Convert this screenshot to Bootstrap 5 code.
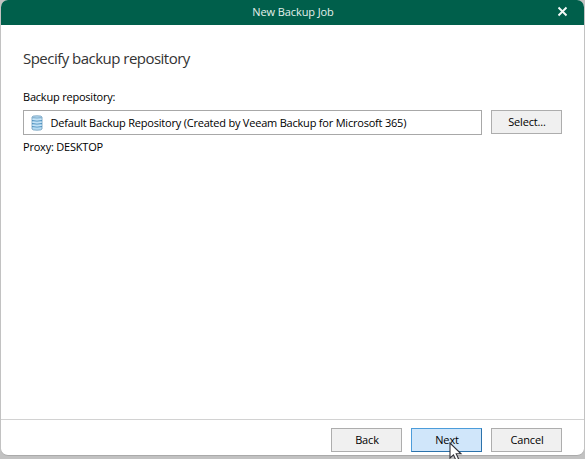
<!DOCTYPE html>
<html lang="en">
<head>
<meta charset="utf-8">
<meta name="viewport" content="width=device-width, initial-scale=1">
<title>New Backup Job</title>
<link href="https://cdn.jsdelivr.net/npm/bootstrap@5.3.0/dist/css/bootstrap.min.css" rel="stylesheet">
<style>
  body { height: 459px; background: #c2c2c2; padding: 0 1px 3px; font-family: "Open Sans", "Noto Sans", sans-serif; font-size: 11px; line-height: 16px; color: #000; letter-spacing: -.21px; }
  .dialog { height: 456px; border-radius: 7px; border-bottom: 1px solid #aaa; background: #fff; }
  .titlebar { height: 25px; background: #005f4b; color: #e4f0ec; letter-spacing: -.1px; }
  .titlebar .title-text { padding: 0 0 2px 1px; }
  .close-btn { right: 16px; top: 6px; width: 11px; height: 11px; line-height: 0; }
  .content { padding: 23px 22px 0; }
  .heading { font-size: 15px; line-height: 20px; color: #333; margin-bottom: 21px; letter-spacing: -.52px; }
  .repo-label { margin-bottom: 5px; }
  .repo-row { gap: 9px; }
  .repo-box { height: 25px; border: 1px solid #a8a8a8; padding-left: 7px; }
  .repo-text { margin-left: 7.500px; }
  .win-btn { width: 71px; height: 24px; padding: 0 0 0 1px; border: 1px solid #adadad; border-radius: 0; background: #f0f0f0; font-size: 11px; line-height: 20px; color: #000; letter-spacing: -.15px; }
  .win-btn.is-default { background: #d0e6fa; border-color: #2c72ab; border-top-color: #4b9cda; border-left-color: #4b9cda; }
  .actions { height: 36px; border-top: 1px solid #d2d2d2; padding: 8px 22px 0; gap: 9px; }
  .pointer { left: 449px; top: 442px; }
</style>
</head>
<body class="m-0 overflow-hidden">
<main class="dialog d-flex flex-column overflow-hidden">
  <header class="titlebar position-relative d-flex align-items-center justify-content-center">
    <span class="title-text">New Backup Job</span>
    <button class="close-btn btn p-0 border-0 position-absolute" aria-label="Close">
      <svg class="d-block" width="11" height="11" viewBox="0 0 11 11"><path d="M1.5 1.5 9.5 9.5M9.5 1.5 1.5 9.5" stroke="#f4faf8" stroke-width="1.900"/></svg>
    </button>
  </header>
  <section class="content flex-grow-1">
    <h1 class="heading fw-normal">Specify backup repository</h1>
    <div class="repo-label"><span>Backup repository:</span></div>
    <div class="repo-row d-flex">
      <div class="repo-box flex-grow-1 d-flex align-items-center">
        <svg width="12" height="16" viewBox="0 0 12 16">
          <path d="M1 2Q1 .8 6 .8t5 1.200v12q0 1.200-5 1.200t-5-1.200z" fill="#b4daf2" stroke="#7aa5c2" stroke-width=".9"/>
          <path d="M1.500 2.500q4.500 1 9 0" fill="none" stroke="#7aa5c2" stroke-width=".8"/>
          <path d="M1 5.500q5 1 10 0M1 8.500q5 1 10 0M1 11.500q5 1 10 0" fill="none" stroke="#4f92c0"/>
          <path d="M1.500 4.500q4.500 1 9 0M1.500 7.500q4.500 1 9 0M1.500 10.500q4.500 1 9 0" fill="none" stroke="#d5edfb" stroke-width=".7"/>
        </svg>
        <span class="repo-text text-nowrap">Default Backup Repository (Created by Veeam Backup for Microsoft 365)</span>
      </div>
      <button class="win-btn btn">Select...</button>
    </div>
    <div class="proxy mt-1"><span>Proxy: DESKTOP</span></div>
  </section>
  <footer class="actions d-flex justify-content-end">
    <button class="win-btn btn">Back</button>
    <button class="win-btn is-default btn">Next</button>
    <button class="win-btn btn">Cancel</button>
  </footer>
</main>
<svg class="pointer position-absolute" width="14" height="20" viewBox="0 0 14 20">
  <path d="M1 1v15l3.500-3.200 2.400 5.400 2.700-1.200-2.400-5.200H12z" fill="#fff" stroke="#303038" stroke-width="1.100"/>
</svg>
<script src="https://cdn.jsdelivr.net/npm/bootstrap@5.3.0/dist/js/bootstrap.bundle.min.js"></script>
</body>
</html>
